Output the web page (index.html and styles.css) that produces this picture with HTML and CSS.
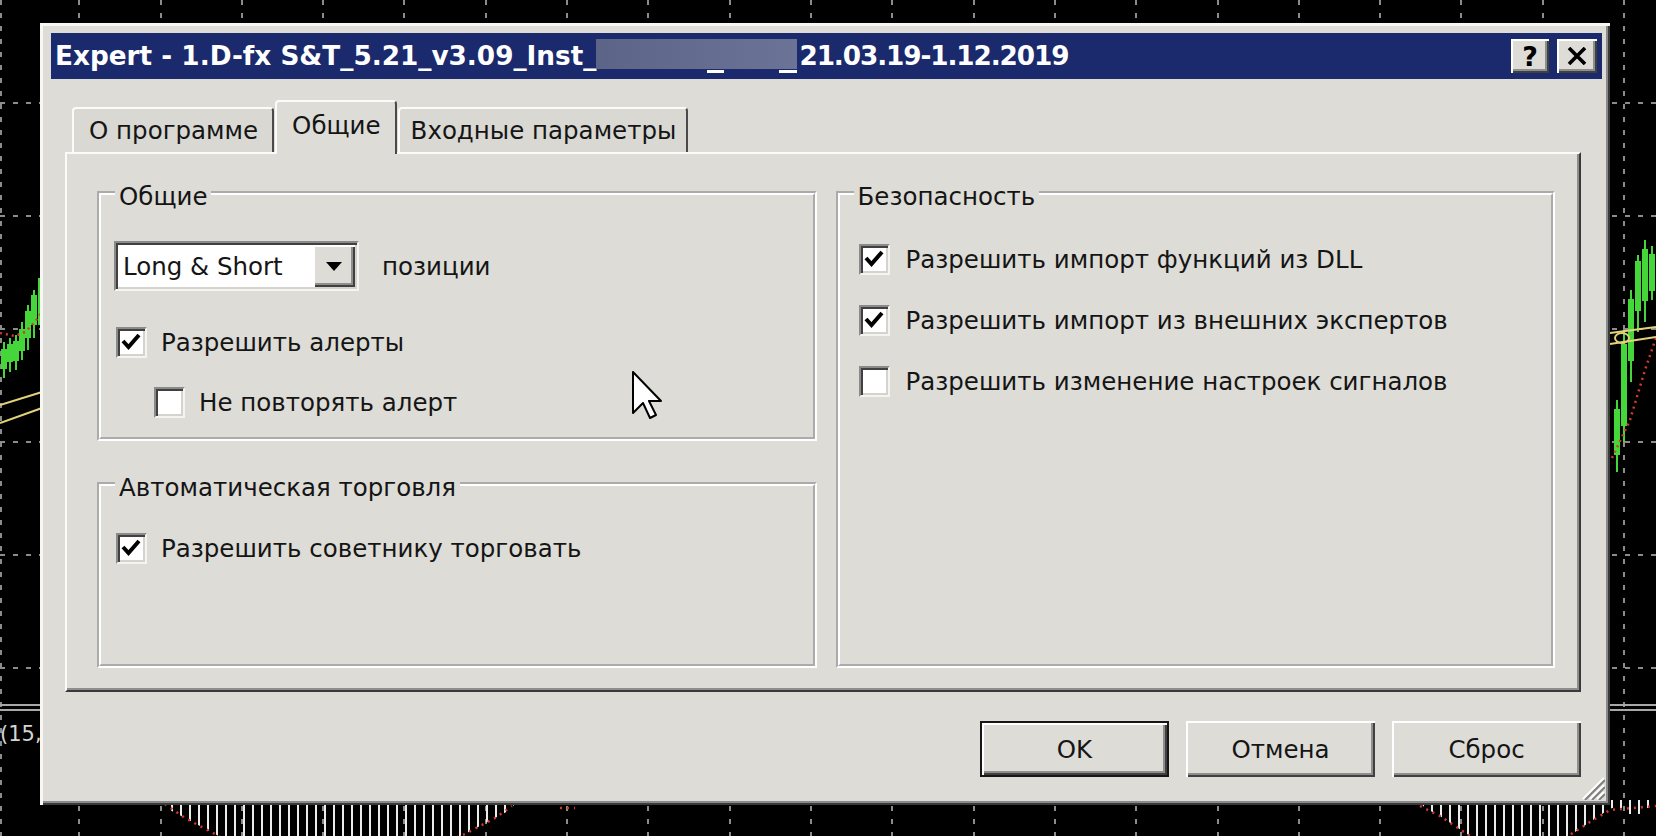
FILE: index.html
```html
<!DOCTYPE html>
<html lang="ru">
<head>
  <meta charset="UTF-8">
  <meta name="viewport" content="width=device-width, initial-scale=1.0">
  <title>Expert</title>
  <link rel="stylesheet" href="styles.css">
</head>
<body>
  <!-- график терминала под окном -->
  <svg class="chart" width="1656" height="836" viewBox="0 0 1656 836">
    <defs>
      <pattern id="bars" width="9" height="60" patternUnits="userSpaceOnUse">
        <rect x="0" y="0" width="2" height="60" fill="#ececec"/>
      </pattern>
    </defs>
    <rect width="1656" height="836" fill="#000"/>
    <g stroke="#8c8c8c" stroke-width="2" stroke-dasharray="5 8" fill="none">
      <path d="M1 0V836M79 0V836M161 0V836M242 0V836M323 0V836M404 0V836M486 0V836M567 0V836M648 0V836M730 0V836M811 0V836M892 0V836M974 0V836M1055 0V836M1136 0V836M1218 0V836M1299 0V836M1380 0V836M1461 0V836M1543 0V836M1624 0V836"/>
      <path d="M0 103H1656M0 216H1656M0 329H1656M0 442H1656M0 555H1656M0 668H1656"/>
    </g>
    <g stroke="#a8a8a8" stroke-width="2">
      <path d="M0 705H1656M0 710H1656"/>
    </g>
    <text x="0" y="741" fill="#d4d4d4" font-family="DejaVu Sans" font-size="21">(15, 3, 3)</text>

    <g stroke="#45d63a" stroke-width="2" fill="none">
      <path d="M4 342V378M10 338V372M16 335V370M22 322V360M28 305V350M34 290V338M39 278V325"/>
      <rect x="2" y="350" width="4" height="18"/>
      <rect x="8" y="345" width="4" height="16"/>
      <rect x="14" y="342" width="4" height="18"/>
      <rect x="20" y="330" width="4" height="20"/>
      <rect x="26" y="312" width="4" height="25"/>
      <rect x="32" y="296" width="4" height="28"/>
      <path d="M1617 400V472M1624 330V442M1631 290V382M1638 255V332M1645 240V322M1652 246V300"/>
      <rect x="1615" y="410" width="4" height="44"/>
      <rect x="1622" y="345" width="4" height="80"/>
      <rect x="1629" y="300" width="4" height="60"/>
      <rect x="1636" y="262" width="4" height="48"/>
      <rect x="1643" y="250" width="4" height="50"/>
      <rect x="1650" y="255" width="4" height="35"/>
    </g>
    <g stroke="#e2d27a" stroke-width="2" fill="none">
      <path d="M0 405L42 392M0 423L42 408"/>
      <path d="M1610 344L1656 337M1610 333L1656 327"/>
      <ellipse cx="1622" cy="338" rx="7" ry="5"/>
    </g>
    <g stroke="#d5392c" stroke-width="2.5" stroke-dasharray="2 4" fill="none">
      <path d="M0 333L15 336L25 332L35 322L42 312"/>
      <path d="M1612 458L1630 420L1645 370L1656 338"/>
    </g>

    <polygon fill="url(#bars)" points="165,800 170,810 185,818 200,826 215,834 225,840 450,840 465,834 480,826 495,818 510,810 518,800"/>
    <polygon fill="url(#bars)" points="1418,800 1425,808 1440,816 1455,826 1470,836 1475,840 1560,840 1575,832 1590,822 1605,812 1612,808 1625,808 1628,814 1640,814 1642,808 1656,808 1656,800"/>
    <g stroke="#d5392c" stroke-width="2.5" stroke-dasharray="2 5" fill="none">
      <path d="M165 804L185 818L200 826L215 834L225 840M450 840L465 834L480 826L495 818L512 806"/>
      <path d="M1420 806L1440 816L1455 826L1470 836M1565 838L1590 822L1610 810L1656 806"/>
      <path d="M560 808H575"/>
    </g>
  </svg>

  <div class="dialog">
    <div class="titlebar">
      <div class="title">Expert - 1.D-fx S&amp;T_5.21_v3.09_Inst_<span class="masked"></span><span class="title-date">21.03.19-1.12.2019</span></div>
      <div class="caption-btns">
        <span class="cap-btn">?</span>
        <span class="cap-btn close">
          <svg width="20" height="18" viewBox="0 0 20 18"><path d="M2 1L18 17M18 1L2 17" stroke="#000" stroke-width="3.6" fill="none"/></svg>
        </span>
      </div>
    </div>

    <div class="tabs">
      <div class="tab">О программе</div>
      <div class="tab active">Общие</div>
      <div class="tab">Входные параметры</div>
    </div>

    <div class="panel">
      <div class="col">
        <fieldset class="group group-common">
          <legend>Общие</legend>
          <div class="combo-row">
            <div class="combo">
              <span class="combo-value">Long &amp; Short</span>
              <span class="combo-btn">
                <svg width="16" height="9" viewBox="0 0 16 9"><path d="M0 0H16L8 9Z" fill="#000"/></svg>
              </span>
            </div>
            <span>позиции</span>
          </div>
          <div class="rows rows-tight">
            <label class="check">
              <span class="box"><svg width="27" height="27" viewBox="0 0 27 27"><path d="M5 12L10.5 18L21 6" stroke="#000" stroke-width="4" fill="none"/></svg></span>
              <span>Разрешить алерты</span>
            </label>
            <label class="check sub">
              <span class="box"></span>
              <span>Не повторять алерт</span>
            </label>
          </div>
        </fieldset>

        <fieldset class="group group-auto">
          <legend>Автоматическая торговля</legend>
          <div class="rows">
            <label class="check">
              <span class="box"><svg width="27" height="27" viewBox="0 0 27 27"><path d="M5 12L10.5 18L21 6" stroke="#000" stroke-width="4" fill="none"/></svg></span>
              <span>Разрешить советнику торговать</span>
            </label>
          </div>
        </fieldset>
      </div>

      <fieldset class="group group-security">
        <legend>Безопасность</legend>
        <div class="rows">
          <label class="check">
            <span class="box"><svg width="27" height="27" viewBox="0 0 27 27"><path d="M5 12L10.5 18L21 6" stroke="#000" stroke-width="4" fill="none"/></svg></span>
            <span>Разрешить импорт функций из DLL</span>
          </label>
          <label class="check">
            <span class="box"><svg width="27" height="27" viewBox="0 0 27 27"><path d="M5 12L10.5 18L21 6" stroke="#000" stroke-width="4" fill="none"/></svg></span>
            <span>Разрешить импорт из внешних экспертов</span>
          </label>
          <label class="check">
            <span class="box"></span>
            <span>Разрешить изменение настроек сигналов</span>
          </label>
        </div>
      </fieldset>
    </div>

    <div class="footer">
      <button class="btn default">OK</button>
      <button class="btn">Отмена</button>
      <button class="btn">Сброс</button>
    </div>

    <svg class="grip" width="26" height="26" viewBox="0 0 26 26">
      <path d="M25 4L4 25M25 11L11 25M25 18L18 25" stroke="#fff" stroke-width="2"/>
      <path d="M26 6L6 26M26 13L13 26M26 20L20 26" stroke="#808080" stroke-width="2"/>
    </svg>
  </div>

  <svg class="cursor" width="32" height="50" viewBox="0 0 32 50">
    <path d="M1 1V42L11 32L18 47L24 44L17 30H29Z" fill="#fff" stroke="#000" stroke-width="2" stroke-linejoin="round"/>
  </svg>
</body>
</html>
```

FILE: styles.css
```css
* {
  box-sizing: border-box;
}

body {
  margin: 0;
  padding: 23px 0 0 40px;
  width: 1656px;
  height: 836px;
  overflow: hidden;
  position: relative;
  background: #000;
  font-family: "DejaVu Sans", sans-serif;
  font-size: 24.5px;
  color: #151515;
}

.chart {
  position: absolute;
  left: 0;
  top: 0;
}

.dialog {
  position: relative;
  width: 1570px;
  height: 782px;
  padding: 10px 8px 0 11px;
  background: #dddcd7;
  box-shadow: inset 3px 3px 0 #f7f7f4, inset -2px -2px 0 #3a3a3a, inset -4px -4px 0 #8a8a8a;
}

/* заголовок окна */
.titlebar {
  height: 46px;
  background: #1a2a6c;
  display: flex;
  align-items: center;
  justify-content: space-between;
  padding: 0 5px 0 4px;
}

.title {
  display: flex;
  align-items: center;
  height: 100%;
  color: #fff;
  font-weight: bold;
  font-size: 26.3px;
  white-space: nowrap;
}

.masked {
  width: 201px;
  height: 34px;
  background:
    linear-gradient(90deg, transparent 111px, #fff 111px, #fff 128px, transparent 128px, transparent 183px, #fff 183px) bottom / 100% 3px no-repeat,
    linear-gradient(90deg, #5c6587, #6b7496) top / 100% 30px no-repeat;
}

.title-date {
  margin-left: 2px;
  letter-spacing: -1.1px;
}

.caption-btns {
  display: flex;
  gap: 8px;
}

.cap-btn {
  width: 38px;
  height: 34px;
  display: flex;
  align-items: center;
  justify-content: center;
  background: #dddcd7;
  color: #000;
  font-weight: bold;
  font-size: 27px;
  box-shadow: inset 2px 2px 0 #fff, inset -2px -2px 0 #404040, inset -4px -4px 0 #8e8e8e;
}

.cap-btn.close {
  width: 40px;
}

/* вкладки */
.tabs {
  display: flex;
  align-items: flex-end;
  gap: 1px;
  margin: 21px 0 0 21px;
}

.tab {
  height: 45px;
  padding: 7px 14px 0 15px;
  line-height: 30px;
  white-space: nowrap;
  background: #d9d8d3;
  border-top: 2px solid #fbfbf8;
  border-left: 2px solid #fbfbf8;
  border-right: 2px solid #4a4a4a;
  border-radius: 4px 4px 0 0;
}

.tab.active {
  height: 54px;
  margin-bottom: -2px;
  padding: 9px 14px 0 15px;
  background: #dddcd7;
  position: relative;
  z-index: 1;
}

.tab:last-child {
  padding: 7px 10px 0 11px;
}

.panel {
  height: 540px;
  margin: 0 21px 0 14px;
  padding: 20px 24px 22px 30px;
  display: grid;
  grid-template-columns: 1fr 1fr;
  gap: 19px;
  border-top: 2px solid #fbfbf8;
  border-left: 2px solid #fbfbf8;
  border-right: 2px solid #3a3a3a;
  border-bottom: 2px solid #3a3a3a;
  box-shadow: inset -2px -2px 0 #8e8e8e;
}

.col {
  display: flex;
  flex-direction: column;
  min-height: 0;
}

/* рамки групп */
.group {
  margin: 0;
  min-width: 0;
  padding: 29px 13px 0;
  border: 4px groove #fff;
}

.group legend {
  margin-left: 1px;
  padding: 8px 4px 0;
  line-height: 30px;
  white-space: nowrap;
}

.group-common {
  height: 267px;
  flex: none;
}

.group-auto {
  flex: 1;
  margin-top: 24px;
}

.combo-row {
  display: flex;
  align-items: center;
  gap: 23px;
  height: 50px;
  margin-bottom: 35px;
}

.combo {
  width: 245px;
  height: 50px;
  display: flex;
  background: #fff;
  border-top: 2px solid #8a8a8a;
  border-left: 2px solid #8a8a8a;
  border-right: 2px solid #f4f4f0;
  border-bottom: 2px solid #f4f4f0;
  box-shadow: inset 2px 2px 0 #404040, inset -2px -2px 0 #d4d3ce;
}

.combo-value {
  flex: 1;
  display: flex;
  align-items: center;
  padding-left: 7px;
  white-space: nowrap;
}

.combo-btn {
  width: 42px;
  margin: 2px 2px 2px 0;
  display: flex;
  align-items: center;
  justify-content: center;
  background: #dddcd7;
  box-shadow: inset 2px 2px 0 #fff, inset -2px -2px 0 #404040, inset -4px -4px 0 #8e8e8e;
}

.rows {
  display: flex;
  flex-direction: column;
  gap: 29px;
}

.rows-tight {
  gap: 28px;
}

.check {
  display: flex;
  align-items: center;
  gap: 14px;
  height: 32px;
  margin-left: 2px;
  white-space: nowrap;
}

.check.sub {
  margin-left: 40px;
}

.group-security .rows {
  margin-top: 2px;
}

.group-security .check {
  margin-left: 6px;
  gap: 16px;
}

.box {
  width: 31px;
  height: 31px;
  flex: none;
  background: #fff;
  border-top: 2px solid #8a8a8a;
  border-left: 2px solid #8a8a8a;
  border-right: 2px solid #f4f4f0;
  border-bottom: 2px solid #f4f4f0;
  box-shadow: inset 2px 2px 0 #404040, inset -2px -2px 0 #d4d3ce;
}

.box svg {
  display: block;
}

/* кнопки внизу */
.footer {
  display: flex;
  justify-content: flex-end;
  gap: 17px;
  margin-top: 29px;
  padding-right: 21px;
}

.btn {
  width: 189px;
  height: 56px;
  padding: 0;
  border: none;
  background: #dddcd7;
  font: inherit;
  color: #151515;
  box-shadow: inset 2px 2px 0 #fff, inset -2px -2px 0 #404040, inset -4px -4px 0 #8e8e8e;
}

.btn.default {
  border: 2px solid #161616;
}

.grip {
  position: absolute;
  right: 5px;
  bottom: 5px;
}

.cursor {
  position: absolute;
  left: 632px;
  top: 371px;
}
```
